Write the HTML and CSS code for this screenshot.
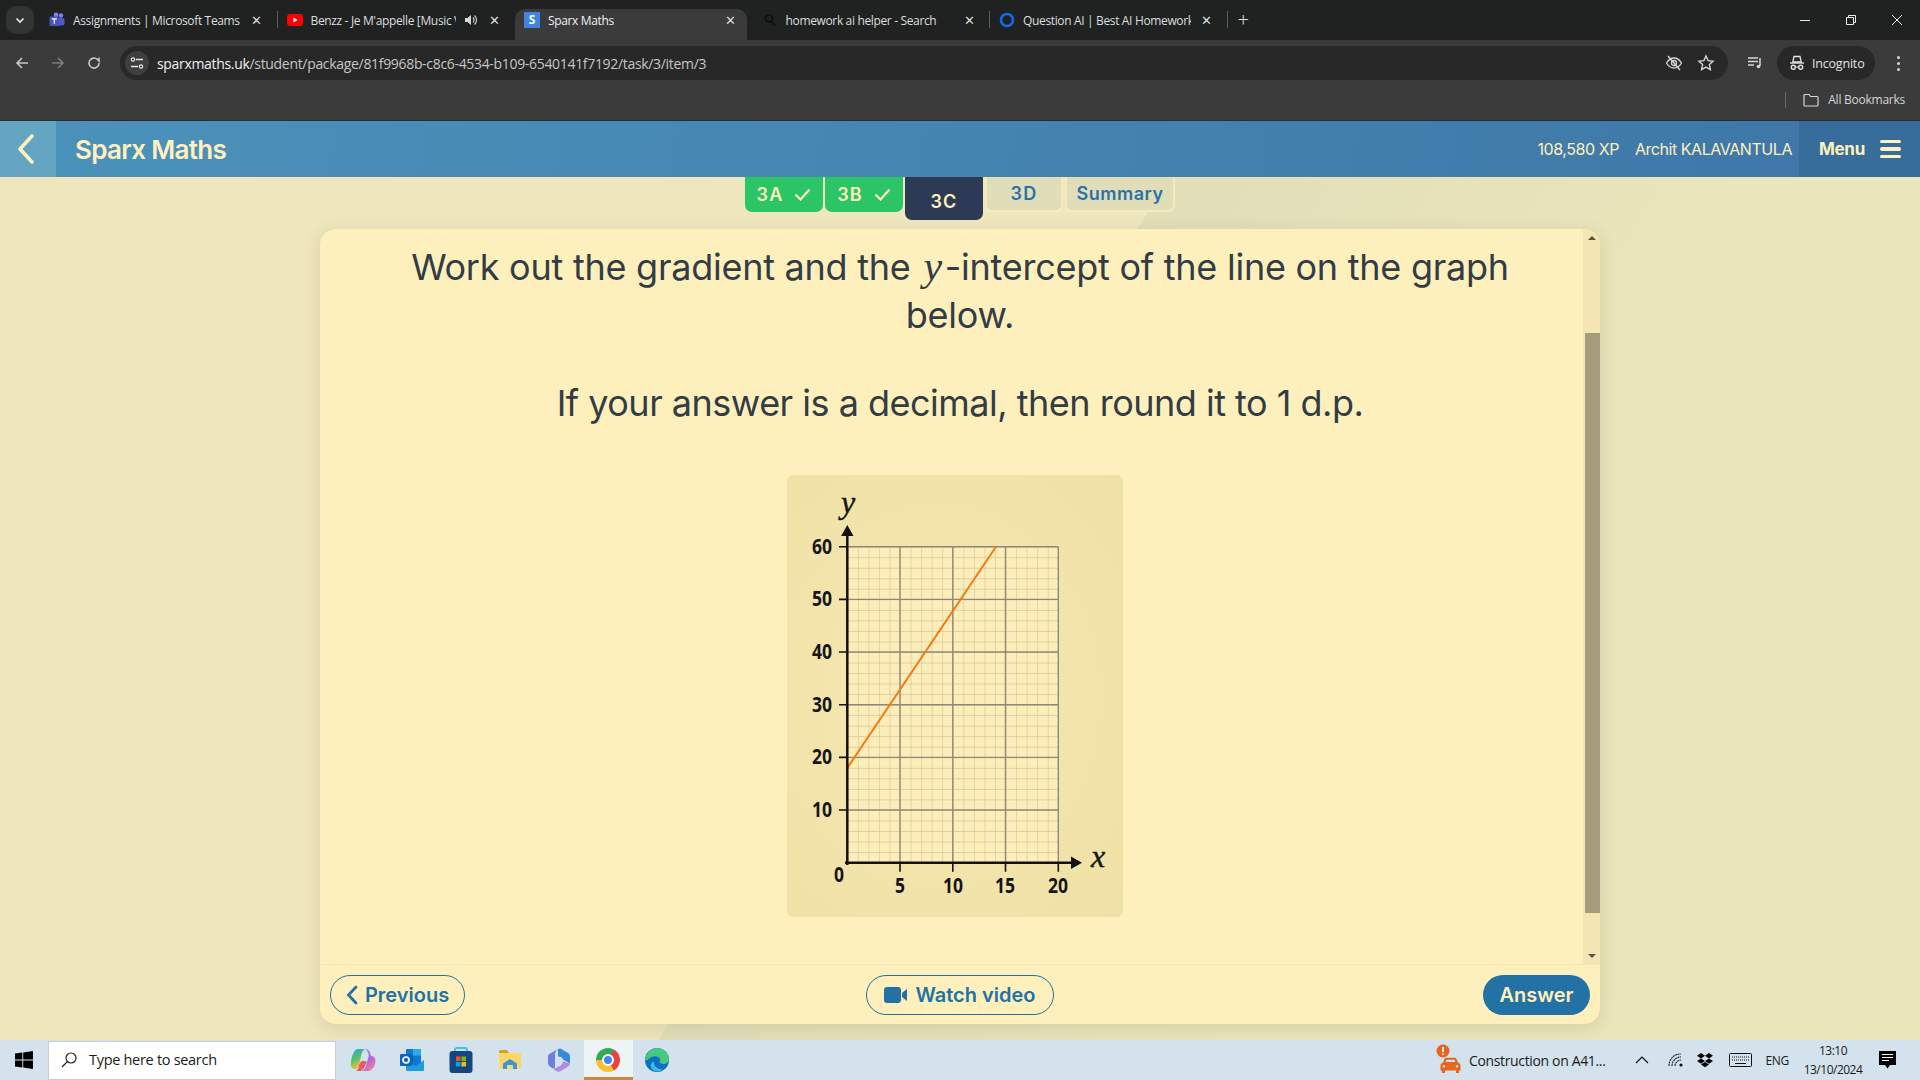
FILE: index.html
```html
<!DOCTYPE html>
<html lang="en">
<head>
  <meta charset="UTF-8" />
  <title>Sparx Maths</title>
  <link rel="stylesheet" href="styles.css">
</head>
<body>
  <div class="tabstrip">
    <div class="tab-search"><svg width="12" height="12" viewBox="0 0 12 12"><path d="M2.500 4.500 6 8l3.500-3.500" fill="none" stroke="#e8eaed" stroke-width="1.600"/></svg></div>
    <div class="tab sep">
      <svg class="fav" viewBox="0 0 16 16"><circle cx="12" cy="3.500" r="2.200" fill="#7b83eb"/><rect x="7" y="6" width="8.500" height="7.500" rx="2" fill="#5059c9"/><circle cx="7" cy="3" r="2.400" fill="#7b83eb"/><rect x="0.500" y="4.500" width="9.500" height="9.500" rx="1" fill="#4b53bc"/><path d="M2.800 6.800h5M5.300 6.800v5" stroke="#fff" stroke-width="1.200"/></svg>
      <span class="tab-title">Assignments | Microsoft Teams</span>
      <span class="tab-x">✕</span>
    </div>
    <div class="tab">
      <svg class="fav" viewBox="0 0 16 16"><rect y="2" width="16" height="12" rx="3" fill="#f00"/><path d="M6.400 5.500v5L10.600 8z" fill="#fff"/></svg>
      <span class="tab-title">Benzz - Je M'appelle [Music Video]</span>
      <svg class="tab-sound" viewBox="0 0 14 14"><path d="M1 5h2.500L7 2v10L3.500 9H1z" fill="#d6d8da"/><path d="M9 4.500a3.500 3.500 0 0 1 0 5M10.500 2.500a6 6 0 0 1 0 9" fill="none" stroke="#d6d8da" stroke-width="1.100"/></svg>
      <span class="tab-x">✕</span>
    </div>
    <div class="tab active">
      <div class="fav fav-sparx">S</div>
      <span class="tab-title">Sparx Maths</span>
      <span class="tab-x">✕</span>
    </div>
    <div class="tab sep">
      <svg class="fav" viewBox="0 0 16 16"><circle cx="7" cy="6.500" r="3.500" fill="none" stroke="#111" stroke-width="2"/><path d="m9.500 9.500 3.500 3.500" stroke="#111" stroke-width="2"/></svg>
      <span class="tab-title">homework ai helper - Search</span>
      <span class="tab-x">✕</span>
    </div>
    <div class="tab sep">
      <svg class="fav" viewBox="0 0 16 16"><circle cx="8" cy="8" r="6" fill="none" stroke="#1468e8" stroke-width="2.600"/></svg>
      <span class="tab-title">Question AI | Best AI Homework Helper</span>
      <span class="tab-x">✕</span>
    </div>
    <div class="tab-new">+</div>
    <div class="win-btns">
      <svg width="12" height="12" viewBox="0 0 12 12"><path d="M1 6.500h10" stroke="#e8eaed" stroke-width="1"/></svg>
      <svg width="12" height="12" viewBox="0 0 12 12"><path d="M1.500 3.500h7v7h-7zM3.500 3.500v-2h7v7h-2" fill="none" stroke="#e8eaed" stroke-width="1"/></svg>
      <svg width="12" height="12" viewBox="0 0 12 12"><path d="m1 1 10 10M11 1 1 11" stroke="#e8eaed" stroke-width="1"/></svg>
    </div>
  </div>

  <div class="toolbar">
    <svg class="nav-icon" viewBox="0 0 16 16"><path d="M14 8H3M8 3 3 8l5 5" fill="none" stroke="#c7c7c7" stroke-width="1.600"/></svg>
    <svg class="nav-icon" viewBox="0 0 16 16"><path d="M2 8h11M8 3l5 5-5 5" fill="none" stroke="#7c7c7c" stroke-width="1.600"/></svg>
    <svg class="nav-icon" viewBox="0 0 16 16"><path d="M13 8a5 5 0 1 1-1.500-3.500L13 6V2.500" fill="none" stroke="#c7c7c7" stroke-width="1.600"/></svg>
    <div class="omnibox">
      <div class="tune"><svg width="14" height="14" viewBox="0 0 14 14"><path d="M6 3.500h7M1 10.500h7" stroke="#e3e3e3" stroke-width="1.300"/><circle cx="3" cy="3.500" r="1.700" fill="none" stroke="#e3e3e3" stroke-width="1.200"/><circle cx="11" cy="10.500" r="1.700" fill="none" stroke="#e3e3e3" stroke-width="1.200"/></svg></div>
      <div class="url"><span class="host">sparxmaths.uk</span>/student/package/81f9968b-c8c6-4534-b109-6540141f7192/task/3/item/3</div>
      <svg class="omni-icon" viewBox="0 0 18 18"><path d="M1.500 9S4.500 4 9 4s7.500 5 7.500 5-3 5-7.500 5-7.500-5-7.500-5z" fill="none" stroke="#d5d5d5" stroke-width="1.300"/><circle cx="9" cy="9" r="2.500" fill="none" stroke="#d5d5d5" stroke-width="1.300"/><path d="m3 2 12 14" stroke="#d5d5d5" stroke-width="1.500"/></svg>
      <svg class="omni-icon" viewBox="0 0 18 18"><path d="m9 2 2.100 4.600 5 .6-3.700 3.400 1 5L9 13.100 4.600 15.600l1-5L1.900 7.200l5-.6z" fill="none" stroke="#d5d5d5" stroke-width="1.400"/></svg>
    </div>
    <svg class="queue" viewBox="0 0 16 16"><path d="M1 3h10M1 6.500h10M1 10h6" stroke="#d5d5d5" stroke-width="1.400"/><path d="M13 3v8" stroke="#d5d5d5" stroke-width="1.500"/><circle cx="11.500" cy="11.500" r="1.800" fill="#d5d5d5"/></svg>
    <div class="incognito">
      <svg width="16" height="16" viewBox="0 0 16 16"><path d="M5 1.500h6L12.200 7H3.800z" fill="none" stroke="#e3e3e3" stroke-width="1.300"/><path d="M1 8h14" stroke="#e3e3e3" stroke-width="1.400"/><circle cx="4.300" cy="12.300" r="2" fill="none" stroke="#e3e3e3" stroke-width="1.400"/><circle cx="11.700" cy="12.300" r="2" fill="none" stroke="#e3e3e3" stroke-width="1.400"/><path d="M6.300 12h3.400" stroke="#e3e3e3"/></svg>
      <span>Incognito</span>
    </div>
    <div class="dots"><i></i><i></i><i></i></div>
  </div>

  <div class="bookmarks">
    <svg width="16" height="14" viewBox="0 0 16 14"><path d="M1 2.500a1 1 0 0 1 1-1h4l1.500 2H14a1 1 0 0 1 1 1v7.500a1 1 0 0 1-1 1H2a1 1 0 0 1-1-1z" fill="none" stroke="#d5d5d5" stroke-width="1.200"/></svg>
    <span>All Bookmarks</span>
  </div>

  <header class="sparx-head">
    <div class="back"><svg width="20" height="32" viewBox="0 0 20 32"><path d="M16 3 4 16l12 13" fill="none" stroke="#fff0bd" stroke-width="3.600" stroke-linecap="round" stroke-linejoin="round"/></svg></div>
    <div class="brand">Sparx Maths</div>
    <div class="xp">108,580 XP</div>
    <div class="student">Archit KALAVANTULA</div>
    <div class="menu">
      <span>Menu</span>
      <div class="burger"><i></i><i></i><i></i></div>
    </div>
  </header>

  <main class="page">
    <div class="tasks">
      <div class="task done">3A <svg width="17" height="13" viewBox="0 0 17 13"><path d="m1.500 6.500 5 5 9-10" fill="none" stroke="#fff0bd" stroke-width="2.200"/></svg></div>
      <div class="task done">3B <svg width="17" height="13" viewBox="0 0 17 13"><path d="m1.500 6.500 5 5 9-10" fill="none" stroke="#fff0bd" stroke-width="2.200"/></svg></div>
      <div class="task current">3C</div>
      <div class="task todo">3D</div>
      <div class="task todo summary">Summary</div>
    </div>

    <section class="card">
      <div class="card-body">
        <div class="question">
          <p class="q-text">Work out the gradient and the <em>y</em>-intercept of the line on the graph below.</p>
          <p class="q-text q-second">If your answer is a decimal, then round it to 1 d.p.</p>
          <div class="graph">
            <svg width="336" height="442" viewBox="0 0 336 442">
              <defs>
                <pattern id="minor" x="60.300" y="71.700" width="10.550" height="10.530" patternUnits="userSpaceOnUse">
                  <rect width="10.550" height="10.530" fill="#fdeeb9"/>
                  <path d="M0 0h10.550M0 0v10.530" stroke="#cfc59d" stroke-width="1.200" fill="none"/>
                </pattern>
              </defs>
              <rect x="60.300" y="71.700" width="211" height="316" fill="url(#minor)"/>
              <g class="major">
                <path d="M60 71.700h211.300M60 124.400h211.300M60 177h211.300M60 229.700h211.300M60 282.400h211.300M60 335h211.300"/>
                <path d="M113 71.700v316M165.800 71.700v316M218.500 71.700v316M271.300 71.700v316"/>
              </g>
              <path d="M60.300 293 209 71.700" stroke="#f47a12" stroke-width="2" fill="none"/>
              <g class="axes">
                <path d="M60.300 390V58M58 387.700h228"/>
                <path d="M52 71.700h8M52 124.400h8M52 177h8M52 229.700h8M52 282.400h8M52 335h8" class="tick"/>
                <path d="M113 387.700v9M165.800 387.700v9M218.500 387.700v9M271.300 387.700v9" class="tick"/>
              </g>
              <path d="M60.300 50 66.500 61h-12.400zM295 387.700 284 394v-12.600z" fill="#111"/>
              <g class="ylab">
                <text x="45" y="78.500" textLength="20" lengthAdjust="spacingAndGlyphs">60</text>
                <text x="45" y="131" textLength="20" lengthAdjust="spacingAndGlyphs">50</text>
                <text x="45" y="184" textLength="20" lengthAdjust="spacingAndGlyphs">40</text>
                <text x="45" y="236.500" textLength="20" lengthAdjust="spacingAndGlyphs">30</text>
                <text x="45" y="289" textLength="20" lengthAdjust="spacingAndGlyphs">20</text>
                <text x="45" y="341.500" textLength="20" lengthAdjust="spacingAndGlyphs">10</text>
              </g>
              <g class="xlab">
                <text x="52" y="407" textLength="10" lengthAdjust="spacingAndGlyphs">0</text>
                <text x="113" y="418" textLength="10" lengthAdjust="spacingAndGlyphs">5</text>
                <text x="166" y="418" textLength="20" lengthAdjust="spacingAndGlyphs">10</text>
                <text x="218" y="418" textLength="20" lengthAdjust="spacingAndGlyphs">15</text>
                <text x="271" y="418" textLength="20" lengthAdjust="spacingAndGlyphs">20</text>
              </g>
              <text class="var" x="61" y="38">y</text>
              <text class="var" x="311" y="392">x</text>
            </svg>
          </div>
        </div>
        <div class="scrollbar">
          <div class="sb-up"></div>
          <div class="sb-track"><div class="sb-thumb"></div></div>
          <div class="sb-down"></div>
        </div>
      </div>
      <footer class="card-foot">
        <div class="btn outline prev"><svg width="12" height="20" viewBox="0 0 12 20"><path d="M10 2 2.500 10l7.500 8" fill="none" stroke="#2272a5" stroke-width="2.800" stroke-linecap="round"/></svg>Previous</div>
        <div class="btn outline video"><svg width="23" height="16" viewBox="0 0 23 16"><rect width="17" height="16" rx="3" fill="#2272a5"/><path d="m18 6 5-4v12l-5-4z" fill="#2272a5"/></svg>Watch video</div>
        <div class="btn solid">Answer</div>
      </footer>
    </section>
  </main>

  <div class="taskbar">
    <div class="start"><svg width="18" height="18" viewBox="0 0 18 18"><path d="m0 2.600 7.300-1v7H0zM8.200 1.400 18 0v8.600H8.200zM0 9.500h7.300v7L0 15.500zM8.200 9.500H18V18l-9.800-1.400z" fill="#000"/></svg></div>
    <div class="search">
      <svg width="18" height="18" viewBox="0 0 18 18"><circle cx="11" cy="7" r="5" fill="none" stroke="#222" stroke-width="1.200"/><path d="M7.500 10.500 2 16" stroke="#222" stroke-width="1.300"/></svg>
      <span>Type here to search</span>
    </div>
    <div class="apps">
      <div class="app">
        <svg width="26" height="24" viewBox="0 0 26 24">
          <defs>
            <linearGradient id="cpl" x1="0" y1="0" x2="0.400" y2="1"><stop offset="0" stop-color="#2a9de8"/><stop offset=".5" stop-color="#4fc46a"/><stop offset="1" stop-color="#f6c13c"/></linearGradient>
            <linearGradient id="cpr" x1="0" y1="0" x2="0.600" y2="1"><stop offset="0" stop-color="#7f8cf0"/><stop offset=".6" stop-color="#b566d8"/><stop offset="1" stop-color="#ee7aa8"/></linearGradient>
            <linearGradient id="cpb" x1="0" y1="0" x2="1" y2="1"><stop offset="0" stop-color="#f36a4a"/><stop offset="1" stop-color="#f0486e"/></linearGradient>
          </defs>
          <path d="M8 1h7c-2 1-3 3-3.500 5L9 17c-.5 3-3 5-5 4-3-1-3.500-4-3-7 .5-5 3-13 7-13z" fill="url(#cpl)"/>
          <path d="M15 1c3 0 4.500 2 5 4l1 3c3 0 4.500 2 4.500 5 0 4-2.500 9-6.500 10h-7c2-1 3.500-3 4-5l2.500-9c.5-2 0-6-3.500-8z" fill="url(#cpr)"/>
          <path d="M9 17c1-3 3-5 5-4l3 .5-2.500 5c-.5 2-2 4-4 4.500H6c2-1 2.500-3 3-6z" fill="url(#cpb)"/>
        </svg>
      </div>
      <div class="app"><svg width="24" height="22" viewBox="0 0 24 22"><rect x="6" y="0" width="15" height="20" rx="1" fill="#0f78d4"/><path d="M13 0h8v6.500h-8z" fill="#30a9e8"/><path d="M6 6.500h7V13H6z" fill="#0a5ba8"/><path d="M6 12l10 5 8-6v10a1 1 0 0 1-1 1H7a1 1 0 0 1-1-1z" fill="#1b9de2"/><rect x="0" y="5" width="12" height="12" rx="1" fill="#0a67b8"/><circle cx="6" cy="11" r="3" fill="none" stroke="#fff" stroke-width="1.700"/></svg></div>
      <div class="app"><svg width="24" height="26" viewBox="0 0 24 26"><path d="M6 6V2.500C6 1.500 7 1 8 1h8c1 0 2 .5 2 1.500V6" fill="none" stroke="#35c3f0" stroke-width="1.800"/><rect x="0.500" y="4" width="23" height="22" rx="3" fill="#14467f"/><rect x="7" y="9.500" width="4.500" height="4.500" fill="#f25022"/><rect x="12.500" y="9.500" width="4.500" height="4.500" fill="#7fba00"/><rect x="7" y="15" width="4.500" height="4.500" fill="#00a4ef"/><rect x="12.500" y="15" width="4.500" height="4.500" fill="#ffb900"/></svg></div>
      <div class="app"><svg width="22" height="20" viewBox="0 0 22 20"><path d="M0 1.500C0 .5 1 0 2 0h6l2 3H0z" fill="#d99f1c"/><rect x="0" y="3" width="22" height="16" rx="1" fill="#fbd767"/><path d="M4 19v-5.500L11 9l7 4.500V19h-4v-4H8v4z" fill="#3d95d8"/></svg></div>
      <div class="app"><svg width="22" height="24" viewBox="0 0 22 24"><path d="M10 1 2 5.500C.5 6.500 0 7.500 0 9v6c0 1.500.5 2.500 2 3.500l3 2 2-1V6.500c0-2 1-4 3-5.500z" fill="#6d7fe0"/><path d="M10 1c2-1 3-.5 4 .5l6 3.500c1.500 1 2 2 2 3.500v7l-7-4c-1-2-4-3-5-2V1z" fill="#3a88dc"/><path d="M22 15.500c0 1.500-.5 2-2 3l-7 4.500c-2 1-3 1-5 0l-3-2.500c2 0 4-1 5-2 2 0 4-1 5-5z" fill="#b48ae0"/><circle cx="11" cy="12" r="3.500" fill="#d3e2ec"/></svg></div>
      <div class="app app-active"><div class="chrome"><div class="chrome-eye"></div></div></div>
      <div class="app"><svg width="24" height="24" viewBox="0 0 24 24"><circle cx="12" cy="12" r="12" fill="#0f6fc0"/><path d="M0 12C1 4 7 0 12.500 0 19 0 24 5 24 11c0 3-2.500 5-5.500 5-2 0-4-1-4-2.500 1-1 1-2 0-3.500-3-3-8-2-11 1-1 1-2.500 2-3.500 1z" fill="#45c97f"/><path d="M9 13c-1 5 4 9 9 8-2 2-5 3-8 2-5-1.500-6-8-1-10z" fill="#37bde8"/></svg></div>
    </div>
    <div class="tray">
      <div class="news">
        <svg width="26" height="32" viewBox="0 0 26 32"><circle cx="7" cy="7" r="6.500" fill="#e8651f"/><path d="M7 3v5M7 9.500v1.500" stroke="#fff" stroke-width="1.800"/><path d="M7 18.500l1.500-3.500a2 2 0 0 1 2-1.200h8a2 2 0 0 1 2 1.200l1.500 3.500c1.500.5 2.500 1.500 2.500 3v5H23v2.500h-3V26.500H9v2.500H6v-2.500H4.500v-5c0-1.500 1-2.500 2.500-3zM9.500 18h10l-1-2.300h-8zM8 21a1.300 1.300 0 1 0 .01 0zM21 21a1.300 1.300 0 1 0 .01 0z" fill="#e8651f" fill-rule="evenodd"/></svg>
        <span>Construction on A41...</span>
      </div>
      <svg class="tray-caret" width="14" height="8" viewBox="0 0 14 8"><path d="m1 7 6-6 6 6" fill="none" stroke="#111" stroke-width="1.200"/></svg>
      <svg class="tray-wifi" width="16" height="16" viewBox="0 0 16 16"><path d="M1 14C1 7 6 2 13 2M4 14c0-5 4-9 9-9M7 14c0-3 2.500-6 6-6" fill="none" stroke="#222" stroke-width="1.100" stroke-dasharray="2 .6"/><circle cx="13" cy="13" r="1.600" fill="#111"/></svg>
      <svg class="tray-drop" width="16" height="15" viewBox="0 0 16 15"><path d="M4 0 0 2.700l4 2.700 4-2.700zM12 0 8 2.700l4 2.700 4-2.700zM0 8l4 2.700L8 8 4 5.400zM8 8l4 2.700L16 8l-4-2.600zM4 11.500 8 14.200l4-2.700-4-2.600z" fill="#000"/></svg>
      <svg class="tray-keys" width="23" height="14" viewBox="0 0 23 14"><rect x=".5" y=".5" width="22" height="13" rx="1" fill="none" stroke="#111"/><path d="M3 4h17M3 7h17" stroke="#111" stroke-dasharray="1 1"/><path d="M6 10.500h11" stroke="#111"/></svg>
      <div class="lang">ENG</div>
      <div class="clock"><div>13:10</div><div>13/10/2024</div></div>
      <svg class="tray-note" width="17" height="18" viewBox="0 0 17 18"><path d="M0 0h17v14h-6l-2.500 3.500L6 14H0z" fill="#000"/><path d="M3 3.500h11M3 6.500h11M3 9.500h7" stroke="#fff" stroke-width="1"/></svg>
    </div>
  </div>
</body>
</html>
```

FILE: styles.css
```css
* { box-sizing: border-box; }
html, body { margin: 0; height: 100%; }
body {
  width: 1920px;
  height: 1080px;
  overflow: hidden;
  display: flex;
  flex-direction: column;
  font-family: 'Open Sans', sans-serif;
}

/* browser chrome */
.tabstrip {
  height: 40px;
  background: #202222;
  display: flex;
  align-items: flex-end;
  color: #dcdedf;
  font-size: 12px;
  letter-spacing: -0.35px;
  padding-left: 6px;
}
.tab-search {
  width: 28px;
  height: 28px;
  margin-bottom: 6px;
  margin-right: 6px;
  border-radius: 10px;
  background: #333535;
  display: flex;
  align-items: center;
  justify-content: center;
}
.tab {
  width: 237.500px;
  height: 31px;
  padding: 0 13px 9px 9px;
  display: flex;
  align-items: center;
  gap: 8px;
  position: relative;
  border-radius: 10px 10px 0 0;
}
.tab.sep::after {
  content: "";
  position: absolute;
  right: 0;
  top: 2px;
  height: 17px;
  width: 1px;
  background: #5b5d5e;
}
.tab.active { background: #3b3b3b; width: 232px; margin-right: 5.500px; color: #f0f0f0; padding-right: 9px; }
.fav { width: 16px; height: 16px; flex: none; }
.fav-sparx {
  background: #3f86e0;
  color: #fff;
  font-size: 12px;
  font-weight: 700;
  text-align: center;
  line-height: 16px;
  border-radius: 1px;
}
.tab-title { flex: 1; white-space: nowrap; overflow: hidden; }
.tab-sound { width: 14px; height: 14px; flex: none; }
.tab-x { flex: none; width: 16px; text-align: center; font-size: 13px; color: #d8dadb; }
.tab-new { font-size: 20px; font-weight: 300; color: #e0e0e0; margin: 0 0 5px 10px; line-height: 30px; }
.win-btns {
  margin-left: auto;
  display: flex;
  gap: 34px;
  padding-right: 17px;
  height: 40px;
  align-items: center;
}

.toolbar {
  height: 40px;
  background: #3b3b3b;
  display: flex;
  align-items: center;
  padding-left: 14px;
  padding-top: 6px;
  color: #e3e3e3;
}
.nav-icon { width: 16px; height: 16px; margin-right: 20px; }
.omnibox {
  width: 1608px;
  margin-left: -2px;
  height: 34px;
  background: #282828;
  border-radius: 17px;
  display: flex;
  align-items: center;
  padding: 0 0 0 5px;
}
.tune {
  width: 24px;
  height: 24px;
  border-radius: 12px;
  background: #3f3f3f;
  display: flex;
  align-items: center;
  justify-content: center;
}
.url { flex: 1; margin-left: 8px; font-size: 14px; letter-spacing: -0.32px; color: #c4c7c5; }
.host { color: #f0f0f0; }
.omni-icon { width: 18px; height: 18px; margin-right: 14px; }
.omni-icon:last-child { margin-right: 13px; }
.queue { width: 16px; height: 16px; margin-left: 19px; }
.incognito {
  width: 98px;
  height: 34px;
  margin-left: 14px;
  background: #282828;
  border-radius: 17px;
  display: flex;
  align-items: center;
  padding-left: 12px;
  gap: 7px;
  font-size: 12.500px;
  letter-spacing: -0.2px;
}
.dots { margin-left: 22px; display: flex; flex-direction: column; gap: 3px; }
.dots i { width: 3px; height: 3px; border-radius: 50%; background: #d5d5d5; display: block; }

.bookmarks {
  height: 41px;
  background: #3b3b3b;
  border-bottom: 1px solid #2c2c2c;
  display: flex;
  align-items: center;
  justify-content: flex-end;
  gap: 9px;
  padding: 0 15px 1px 0;
  font-size: 12px;
  letter-spacing: -0.25px;
  color: #d5d5d5;
}
.bookmarks::before {
  content: "";
  width: 1px;
  height: 16px;
  background: #686868;
  margin-right: 8px;
}

/* sparx header */
.sparx-head {
  height: 56px;
  flex: none;
  background: linear-gradient(100deg, #4b93bb, #3e76a7);
  color: #fff0bd;
  display: flex;
  align-items: center;
  font-family: 'Inter', sans-serif;
}
.back {
  width: 56px;
  height: 100%;
  background: #64a6c1;
  display: flex;
  align-items: center;
  justify-content: center;
  padding-right: 4px;
}
.brand { margin-left: 19px; font-size: 26px; font-weight: 600; letter-spacing: -0.7px; flex: 1; }
.xp, .student { font-size: 16px; letter-spacing: -0.45px; }
.student { margin-left: 16px; margin-right: 7px; }
.menu {
  width: 121px;
  height: 100%;
  background: #366d9a;
  display: flex;
  align-items: center;
  padding-left: 20px;
  gap: 15px;
  font-size: 17px;
  font-weight: 700;
  letter-spacing: -0.3px;
}
.burger { width: 21px; display: flex; flex-direction: column; gap: 4px; }
.burger i { height: 3.500px; background: #fff0bd; border-radius: 2px; display: block; }

/* page */
.page {
  flex: 1;
  min-height: 0;
  background: linear-gradient(120.6deg, #eee6bd 1006px, #e1deb8 1006px, #ebe5bb 1500px);
  display: flex;
  flex-direction: column;
  align-items: center;
  font-family: 'Inter', sans-serif;
}
.tasks { display: flex; gap: 2px; height: 52px; align-items: flex-start; flex: none; }
.task {
  width: 78px;
  height: 35px;
  border-radius: 0 0 7px 7px;
  display: flex;
  align-items: center;
  justify-content: center;
  gap: 11px;
  font-size: 18px;
  font-weight: 600;
  letter-spacing: 1.200px;
}
.task.done { background: #2bc566; color: #fff0bd; }
.task.current { background: #2d3a56; color: #fff0bd; height: 43px; padding-top: 6px; }
.task.todo { background: #dfdeb8; color: #2a72a8; border: 2px solid #f6eabc; border-top: 0; }
.task.summary { width: 110px; letter-spacing: 0.5px; }

.card {
  width: 1280px;
  height: 795px;
  flex: none;
  background: #fef0bc;
  border-radius: 16px;
  box-shadow: 0 4px 18px rgba(90, 80, 30, 0.14);
  display: flex;
  flex-direction: column;
  overflow: hidden;
}
.card-body { flex: 1; min-height: 0; display: flex; }
.question { flex: 1; min-width: 0; display: flex; flex-direction: column; align-items: center; padding-top: 14px; }
.q-text {
  margin: 0 -17px 0 0;
  width: 1130px;
  text-align: center;
  font-size: 36px;
  line-height: 48px;
  color: #333c45;
  letter-spacing: -0.25px;
}
.q-text em {
  font-family: 'Liberation Serif', serif;
  font-style: italic;
  font-size: 42px;
  line-height: 1;
  padding: 0 3px 0 3px;
}
.q-second { margin-top: 40px; letter-spacing: -0.5px; }
.graph {
  margin-top: 48px;
  margin-left: 7px;
  width: 336px;
  height: 442px;
  background: radial-gradient(ellipse at 45% 50%, #f7e8b2, #efe0a5);
  border-radius: 6px;
}
.major path { stroke: #8f8a76; stroke-width: 1.400; fill: none; }
.axes path { stroke: #111; stroke-width: 2.500; fill: none; }
.axes path.tick { stroke-width: 1.600; }
.ylab text, .xlab text {
  font-family: 'Open Sans', sans-serif;
  font-weight: 700;
  font-size: 22px;
  fill: #151515;
}
.ylab text { text-anchor: end; }
.xlab text { text-anchor: middle; }
.var {
  font-family: 'Liberation Serif', serif;
  font-style: italic;
  font-size: 32px;
  text-anchor: middle;
  fill: #151515;
  stroke: #151515;
  stroke-width: 0.4;
}

.scrollbar { width: 17px; background: #f3e6b4; display: flex; flex-direction: column; flex: none; }
.sb-up, .sb-down { height: 17px; display: flex; align-items: center; justify-content: center; }
.sb-up::before, .sb-down::before {
  content: "";
  border-left: 4px solid transparent;
  border-right: 4px solid transparent;
}
.sb-up::before { border-bottom: 4px solid #5a5440; }
.sb-down::before { border-top: 4px solid #5a5440; }
.sb-track { flex: 1; padding: 87px 0 34px 2px; }
.sb-thumb { height: 100%; background: #a49c7d; }

.card-foot {
  height: 60px;
  flex: none;
  border-top: 1px solid #f4e6b5;
  display: grid;
  grid-template-columns: 1fr auto 1fr;
  align-items: center;
  padding: 0 10px;
}
.btn {
  height: 40px;
  border-radius: 20px;
  display: flex;
  align-items: center;
  justify-content: center;
  font-size: 20px;
  font-weight: 600;
  gap: 7px;
}
.outline { border: 1.500px solid #2272a5; color: #2272a5; }
.prev { width: 135px; }
.video { width: 188px; gap: 8px; }
.solid { width: 107px; background: #2272a5; color: #fff0bd; justify-self: end; }

/* windows taskbar */
.taskbar {
  height: 40px;
  flex: none;
  background: #d3e2ec;
  display: flex;
  align-items: center;
  font-family: 'Open Sans', sans-serif;
  color: #1a1a1a;
}
.start { width: 48px; display: flex; justify-content: center; }
.search {
  width: 288px;
  height: 39px;
  margin-top: 1px;
  background: #fff;
  border: 1px solid #c9cdd0;
  display: flex;
  align-items: center;
  padding: 0 0 2px 11px;
  gap: 11px;
  font-size: 14.500px;
  letter-spacing: -0.3px;
}
.apps { display: flex; margin-left: 2.500px; }
.app { width: 49px; height: 40px; display: flex; align-items: center; justify-content: center; }
.app-active { background: #eef3f6; border-bottom: 3px solid #cb8a33; padding-top: 3px; }
.chrome {
  width: 24px;
  height: 24px;
  border-radius: 50%;
  background: conic-gradient(from 30deg, #e8453c 0 120deg, #fbc02d 120deg 240deg, #34a853 240deg 360deg);
  display: flex;
  align-items: center;
  justify-content: center;
}
.chrome-eye { width: 12.500px; height: 12.500px; border-radius: 50%; background: #4285f4; border: 2.200px solid #fff; }
.tray { margin-left: auto; display: flex; align-items: center; height: 100%; }
.news { display: flex; align-items: center; gap: 7px; font-size: 14px; letter-spacing: -0.35px; margin-right: 30px; }
.tray-caret { margin-right: 19px; }
.tray-wifi { margin-right: 13px; }
.tray-drop { margin-right: 16px; }
.tray-keys { margin-right: 13px; }
.lang { font-size: 12px; letter-spacing: -0.3px; margin-right: 14px; }
.clock { font-size: 12px; letter-spacing: -0.5px; text-align: center; line-height: 19px; width: 60px; margin-right: 16px; }
.tray-note { margin-right: 24px; }
```
